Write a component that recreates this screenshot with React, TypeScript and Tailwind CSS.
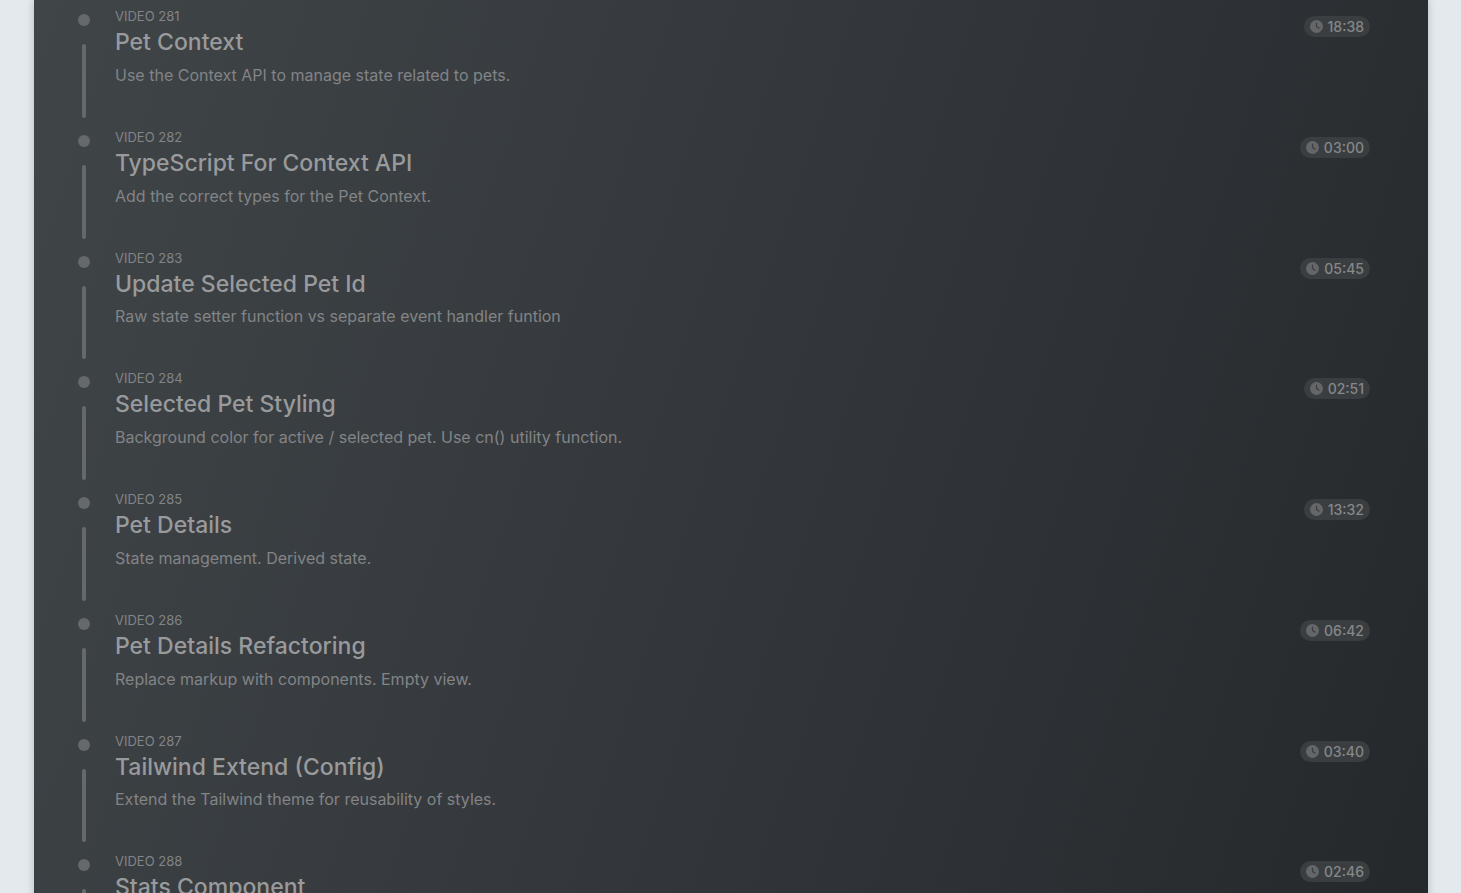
import { FaClock } from 'react-icons/fa6'

const videos = [
  { number: 281, title: 'Pet Context', description: 'Use the Context API to manage state related to pets.', duration: '18:38' },
  { number: 282, title: 'TypeScript For Context API', description: 'Add the correct types for the Pet Context.', duration: '03:00' },
  { number: 283, title: 'Update Selected Pet Id', description: 'Raw state setter function vs separate event handler funtion', duration: '05:45' },
  { number: 284, title: 'Selected Pet Styling', description: 'Background color for active / selected pet. Use cn() utility function.', duration: '02:51' },
  { number: 285, title: 'Pet Details', description: 'State management. Derived state.', duration: '13:32' },
  { number: 286, title: 'Pet Details Refactoring', description: 'Replace markup with components. Empty view.', duration: '06:42' },
  { number: 287, title: 'Tailwind Extend (Config)', description: 'Extend the Tailwind theme for reusability of styles.', duration: '03:40' },
  { number: 288, title: 'Stats Component', description: '', duration: '02:46' },
]

type Video = (typeof videos)[number]

function VideoItem({ number, title, description, duration }: Video) {
  return (
    <li className="flex gap-[25px]">
      <div className="flex w-3 flex-col items-center gap-[18px] pt-2 pb-[9px]">
        <span className="size-3 shrink-0 rounded-full bg-[#66696b]" />
        <span className="w-1 flex-1 rounded-sm bg-[#66696b]" />
      </div>
      <div className="flex-1 pb-[39px]">
        <p className="mb-0.5 text-[13px] leading-5 text-[#828486] uppercase">Video {number}</p>
        <h3 className="text-[23px] leading-tight font-medium text-[#989a9c]">{title}</h3>
        <p className="mt-[5px] min-h-[26px] text-base leading-[26px] text-[#828486]">{description}</p>
      </div>
      <div className="pt-2.5">
        <span className="flex items-center gap-[5px] rounded-full bg-[#3b3e40] px-1.5 text-sm leading-[21px] font-medium text-[#858789]">
          <FaClock className="size-[13px] text-[#646668]" />
          {duration}
        </span>
      </div>
    </li>
  )
}

export default function App() {
  return (
    <main className="h-screen overflow-hidden bg-[#e4e9ed] pr-[33px] pl-[34px] font-['Inter',sans-serif]">
      <section className="min-h-full bg-linear-[108deg] from-[#404548] via-[#33373b] to-[#25282b] pr-[58px] pl-11 shadow-[0_0_8px_rgba(0,0,0,0.2)]">
        <ol className="pt-1.5">
          {videos.map((video) => (
            <VideoItem key={video.number} {...video} />
          ))}
        </ol>
      </section>
    </main>
  )
}
